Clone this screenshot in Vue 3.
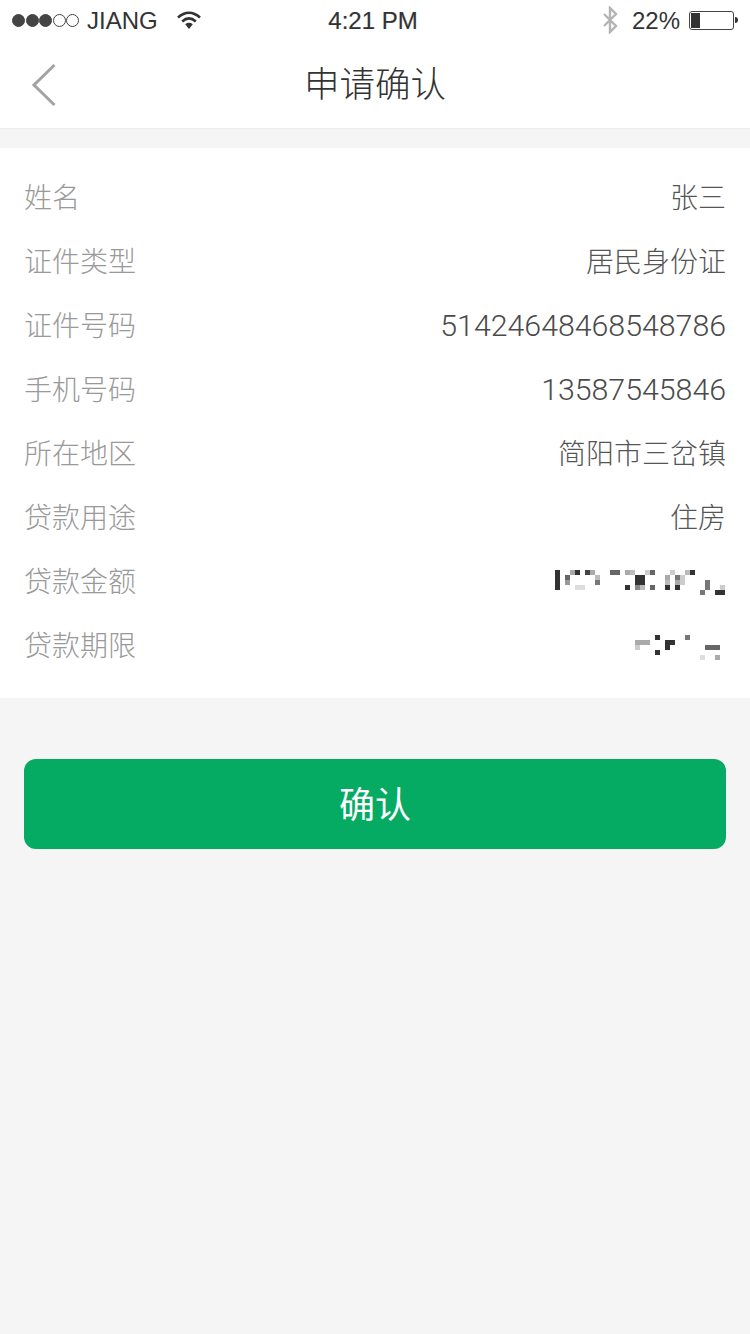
<script setup>
const rows = [
  { label: '姓名', value: '张三' },
  { label: '证件类型', value: '居民身份证' },
  { label: '证件号码', value: '51424648468548786', num: true },
  { label: '手机号码', value: '13587545846', num: true },
  { label: '所在地区', value: '简阳市三岔镇' },
  { label: '贷款用途', value: '住房' },
  { label: '贷款金额', mosaic: 'a' },
  { label: '贷款期限', mosaic: 'b' }
]
const cell = (c, r, color, w = 1, h = 1) => ({ c, r, color, w, h })
const mosaics = {
  a: { cells: [
    cell(0,0,'#333',1,4), cell(2,1,'#666'), cell(2,2,'#999'), cell(3,0,'#aaa'), cell(4,0,'#333'),
    cell(4,3,'#ddd',2), cell(6,0,'#444'), cell(7,0,'#aaa'), cell(8,1,'#bbb'), cell(8,2,'#777'),
    cell(11,0,'#666',2), cell(14,0,'#aaa'), cell(15,0,'#bbb'), cell(14,3,'#333'),
    cell(16,1,'#333',2,2), cell(16,3,'#888'), cell(17,3,'#bbb'), cell(18,0,'#ccc'),
    cell(19,0,'#666'), cell(19,3,'#666'), cell(22,1,'#aaa'), cell(22,2,'#bbb'), cell(22,3,'#333'),
    cell(23,0,'#ccc'), cell(24,1,'#777'), cell(24,2,'#aaa'), cell(24,3,'#333'), cell(25,1,'#ccc',1,2),
    cell(26,0,'#bbb'), cell(27,0,'#333'), cell(30,2,'#777',1,2), cell(29,4,'#777'),
    cell(32,4,'#333',2), cell(33,3,'#ccc')
  ] },
  b: { cells: [
    cell(0,1,'#aaa',3), cell(0,2,'#ccc'), cell(4,0,'#333'), cell(4,3,'#333'),
    cell(6,1,'#333',2), cell(6,2,'#333'), cell(10,0,'#777'), cell(14,2,'#666',3),
    cell(16,4,'#aaa'), cell(13,4,'#ddd')
  ] }
}
const cellStyle = (m) => ({
  gridColumn: `${m.c + 1} / span ${m.w}`,
  gridRow: `${m.r + 1} / span ${m.h}`,
  background: m.color
})
</script>

<template>
  <div class="page">
    <div class="status">
      <div class="status-left">
        <span class="dots">
          <i class="dot on"></i><i class="dot on"></i><i class="dot on"></i><i class="dot"></i><i class="dot"></i>
        </span>
        <span class="carrier">JIANG</span>
        <svg class="wifi" width="26" height="20" viewBox="0 0 26 20">
          <path d="M2 7.5C9 1.2 17 1.2 24 7.5" fill="none" stroke="#333" stroke-width="2.6"/>
          <path d="M6.2 11.5C10.5 7.6 15.5 7.6 19.8 11.5" fill="none" stroke="#333" stroke-width="2.6"/>
          <path d="M9.2 14.2C11.6 12.4 14.4 12.4 16.8 14.2L13 19Z" fill="#333"/>
        </svg>
      </div>
      <span class="time">4:21 PM</span>
      <div class="status-right">
        <svg class="bt" width="18" height="28" viewBox="0 0 18 28">
          <path d="M3 8L15 20L9 26V2L15 8L3 20" fill="none" stroke="#b4b4b4" stroke-width="2.4"/>
        </svg>
        <span class="pct">22%</span>
        <span class="battery"><span class="level"></span></span>
        <span class="tip"></span>
      </div>
    </div>

    <header class="nav">
      <svg class="back" width="26" height="44" viewBox="0 0 26 44">
        <path d="M23.5 2L3 22L23.5 42" fill="none" stroke="#a3a3a3" stroke-width="3"/>
      </svg>
      <h1 class="title">申请确认</h1>
    </header>

    <section class="list">
      <div v-for="row in rows" :key="row.label" class="row">
        <span class="label">{{ row.label }}</span>
        <span v-if="row.value" class="value" :class="{ num: row.num }">{{ row.value }}</span>
        <div v-else class="mosaic" :class="'mosaic-' + row.mosaic">
          <i v-for="(m, i) in mosaics[row.mosaic].cells" :key="i" :style="cellStyle(m)"></i>
        </div>
      </div>
    </section>

    <div class="action">
      <button class="confirm" type="button">确认</button>
    </div>
  </div>
</template>

<style>
html, body { margin: 0; background: #f5f5f5; }
</style>

<style scoped>
.page {
  width: 750px;
  height: 1334px;
  background: #f5f5f5;
  font-family: "Liberation Sans", "Noto Sans CJK SC", sans-serif;
  overflow: hidden;
}
.status {
  height: 40px;
  background: #fff;
  display: grid;
  grid-template-columns: 1fr auto 1fr;
  align-items: center;
  color: #333;
  font-size: 24px;
  padding: 0 12px;
  box-sizing: border-box;
}
.status-left { display: flex; align-items: center; }
.dots { display: flex; gap: 0.5px; }
.dot {
  width: 13px;
  height: 13px;
  border: 1px solid #444;
  border-radius: 50%;
  box-sizing: border-box;
}
.dot.on { background: #444; }
.carrier { margin-left: 8px; padding-top: 2px; }
.wifi { margin-left: 18px; margin-top: -1px; }
.time { margin-right: 4px; padding-top: 2px; -webkit-text-stroke: 0.2px #333; }
.status-right { display: flex; align-items: center; justify-content: flex-end; }
.bt { margin-right: 13px; }
.pct { margin-right: 9px; padding-top: 2px; }
.battery {
  width: 45px;
  height: 19px;
  border: 1px solid #444;
  border-radius: 3px;
  box-sizing: border-box;
  padding: 1px;
  display: flex;
}
.level { width: 9px; background: #333; }
.tip { width: 3px; height: 6px; background: #333; border-radius: 0 3px 3px 0; margin-left: 1px; }
.nav {
  height: 88px;
  background: #fff;
  display: flex;
  align-items: center;
  justify-content: center;
  position: relative;
  box-shadow: 0 1px 1px #eee;
}
.back { position: absolute; left: 31px; top: 23px; }
.title {
  margin: 0;
  padding-bottom: 5px;
  font-size: 35.5px;
  font-weight: 300;
  color: #333;
  font-family: "Noto Sans CJK SC", sans-serif;
}
.list {
  margin-top: 20px;
  height: 550px;
  padding: 16px 24px 0;
  box-sizing: border-box;
  background: #fff;
}
.row {
  height: 64px;
  display: flex;
  align-items: center;
  justify-content: space-between;
  font-size: 28px;
}
.label { color: #999; font-weight: 300; font-family: "Noto Sans CJK SC", sans-serif; }
.value { color: #555; font-weight: 300; font-family: "Noto Sans CJK SC", sans-serif; }
.value.num { color: #4a4a4a; font-family: Roboto, sans-serif; font-size: 30.3px; padding-top: 2px; }
.mosaic { display: grid; grid-auto-rows: 5px; grid-template-columns: repeat(34, 5px); height: 25px; margin: 5px 1px 0 0; }
.mosaic-b { grid-template-columns: repeat(18, 5px); margin-top: 7px; }
.action { padding: 61px 24px 0; }
.confirm {
  display: block;
  width: 100%;
  height: 90px;
  border: 0;
  border-radius: 12px;
  background: #05aa63;
  color: #fff;
  font-size: 36px;
  font-family: "Noto Sans CJK SC", sans-serif;
  padding: 0 0 4px;
}
</style>
